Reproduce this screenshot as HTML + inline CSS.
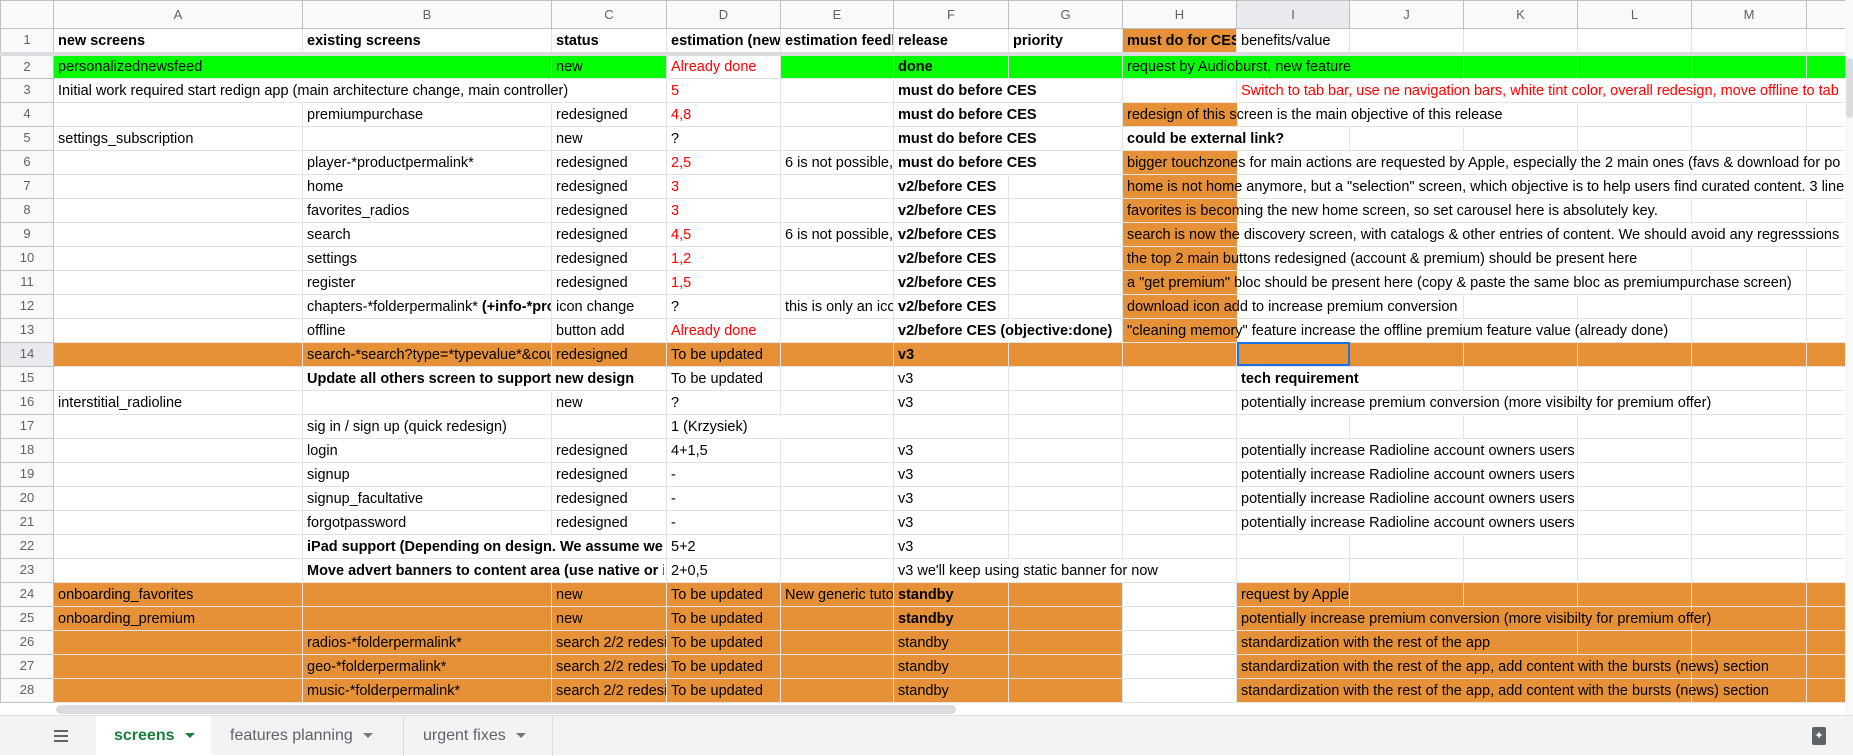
<!DOCTYPE html>
<html><head><meta charset="utf-8"><style>
*{margin:0;padding:0;box-sizing:border-box}
body{width:1853px;height:755px;overflow:hidden;background:#fff;font-family:"Liberation Sans",Arial,sans-serif;position:relative}
table{position:absolute;left:0;top:0;border-collapse:collapse;table-layout:fixed;width:1845px}
td{border:1px solid #e2e3e3;height:24px;font-size:14.5px;line-height:22px;padding:0 4px;white-space:nowrap;overflow:hidden;color:#000;vertical-align:bottom}
td.o{overflow:visible}
td.c{border-left-style:hidden}
tr.h td{background:#f8f9fa;color:#5f6368;text-align:center;font-size:13px;height:28px;vertical-align:middle;border-color:#c0c0c0}
td.n{background:#f8f9fa;color:#5f6368;text-align:center;font-size:13px;border-color:#c0c0c0;padding:0;vertical-align:middle}
tr.h td.sel,td.n.sel{background:#e8eaed}
b{font-weight:bold}
.r{color:#f00}
.g{background:#00ff00}
.or{background:#e69138}
tr.r1 td{height:25px}
tr.r1 td{border-bottom:4px solid #dadce0}
tr.r2 td{height:23px}
.selc{outline:2px solid #1a73e8;outline-offset:-2px}
.clip{display:inline-block;width:357px;overflow:hidden;vertical-align:bottom}
#hs{position:absolute;left:53px;top:704px;width:1792px;height:11px;background:#fff}
#hs div{position:absolute;left:3px;top:1px;width:900px;height:9px;background:#dadce0;border-radius:5px}
#vs{position:absolute;left:1845px;top:0;width:8px;height:715px;background:#f8f9fa}
#vs div{position:absolute;left:1px;top:58px;width:7px;height:60px;background:#dadce0;border-radius:4px}
#tb{position:absolute;left:0;top:715px;width:1853px;height:40px;background:#f1f3f4;border-top:1px solid #e0e0e0}
.tab{position:absolute;top:0;height:40px;font-size:16px;line-height:40px;color:#5f6368;padding-left:18px}
.tab i{display:inline-block;width:0;height:0;border-left:5px solid transparent;border-right:5px solid transparent;border-top:5px solid #757575;margin-left:10px;vertical-align:middle}
</style></head><body>
<table>
<colgroup><col style="width:53px"><col style="width:249px"><col style="width:249px"><col style="width:115px"><col style="width:114px"><col style="width:113px"><col style="width:115px"><col style="width:114px"><col style="width:114px"><col style="width:113px"><col style="width:114px"><col style="width:114px"><col style="width:114px"><col style="width:115px"><col style="width:39px"></colgroup>
<tr class="h"><td></td><td>A</td><td>B</td><td>C</td><td>D</td><td>E</td><td>F</td><td>G</td><td>H</td><td class="sel">I</td><td>J</td><td>K</td><td>L</td><td>M</td><td></td></tr>
<tr class="r1"><td class="n">1</td><td><b>new screens</b></td><td><b>existing screens</b></td><td><b>status</b></td><td><b>estimation (new</b></td><td><b>estimation feedback</b></td><td><b>release</b></td><td><b>priority</b></td><td class="or"><b>must do for CES</b></td><td>benefits/value</td><td></td><td></td><td></td><td></td><td></td></tr>
<tr class="r2"><td class="n">2</td><td class="g o">personalizednewsfeed</td><td class="g c"></td><td class="g">new</td><td class="r">Already done</td><td class="g"></td><td class="g"><b>done</b></td><td class="g"></td><td class="g o">request by Audioburst, new feature</td><td class="g c"></td><td class="g c"></td><td class="g"></td><td class="g"></td><td class="g"></td><td class="g"></td></tr>
<tr><td class="n">3</td><td class="o">Initial work required start redign app (main architecture change, main controller)</td><td class="c"></td><td class="c"></td><td class="r">5</td><td></td><td class="o"><b>must do before CES</b></td><td class="c"></td><td></td><td class="o r">Switch to tab bar, use ne navigation bars, white tint color, overall redesign, move offline to tab</td><td class="c"></td><td class="c"></td><td class="c"></td><td class="c"></td><td class="c"></td></tr>
<tr><td class="n">4</td><td></td><td>premiumpurchase</td><td>redesigned</td><td class="r">4,8</td><td></td><td class="o"><b>must do before CES</b></td><td class="c"></td><td class="or o">redesign of this screen is the main objective of this release</td><td class="c"></td><td class="c"></td><td class="c"></td><td></td><td></td><td></td></tr>
<tr><td class="n">5</td><td>settings_subscription</td><td></td><td>new</td><td>?</td><td></td><td class="o"><b>must do before CES</b></td><td class="c"></td><td class="o"><b>could be external link?</b></td><td class="c"></td><td></td><td></td><td></td><td></td><td></td></tr>
<tr><td class="n">6</td><td></td><td>player-*productpermalink*</td><td>redesigned</td><td class="r">2,5</td><td>6 is not possible, too</td><td class="o"><b>must do before CES</b></td><td class="c"></td><td class="or o">bigger touchzones for main actions are requested by Apple, especially the 2 main ones (favs &amp; download for po</td><td class="c"></td><td class="c"></td><td class="c"></td><td class="c"></td><td class="c"></td><td class="c"></td></tr>
<tr><td class="n">7</td><td></td><td>home</td><td>redesigned</td><td class="r">3</td><td></td><td><b>v2/before CES</b></td><td></td><td class="or o">home is not home anymore, but a "selection" screen, which objective is to help users find curated content. 3 line</td><td class="c"></td><td class="c"></td><td class="c"></td><td class="c"></td><td class="c"></td><td class="c"></td></tr>
<tr><td class="n">8</td><td></td><td>favorites_radios</td><td>redesigned</td><td class="r">3</td><td></td><td><b>v2/before CES</b></td><td></td><td class="or o">favorites is becoming the new home screen, so set carousel here is absolutely key.</td><td class="c"></td><td class="c"></td><td class="c"></td><td class="c"></td><td></td><td></td></tr>
<tr><td class="n">9</td><td></td><td>search</td><td>redesigned</td><td class="r">4,5</td><td>6 is not possible, too</td><td><b>v2/before CES</b></td><td></td><td class="or o">search is now the discovery screen, with catalogs &amp; other entries of content. We should avoid any regresssions</td><td class="c"></td><td class="c"></td><td class="c"></td><td class="c"></td><td class="c"></td><td class="c"></td></tr>
<tr><td class="n">10</td><td></td><td>settings</td><td>redesigned</td><td class="r">1,2</td><td></td><td><b>v2/before CES</b></td><td></td><td class="or o">the top 2 main buttons redesigned (account &amp; premium) should be present here</td><td class="c"></td><td class="c"></td><td class="c"></td><td class="c"></td><td></td><td></td></tr>
<tr><td class="n">11</td><td></td><td>register</td><td>redesigned</td><td class="r">1,5</td><td></td><td><b>v2/before CES</b></td><td></td><td class="or o">a "get premium" bloc should be present here (copy &amp; paste the same bloc as premiumpurchase screen)</td><td class="c"></td><td class="c"></td><td class="c"></td><td class="c"></td><td class="c"></td><td></td></tr>
<tr><td class="n">12</td><td></td><td>chapters-*folderpermalink* <b>(+info-*productpermalink*)</b></td><td>icon change</td><td>?</td><td>this is only an icon</td><td><b>v2/before CES</b></td><td></td><td class="or o">download icon add to increase premium conversion</td><td class="c"></td><td class="c"></td><td></td><td></td><td></td><td></td></tr>
<tr><td class="n">13</td><td></td><td>offline</td><td>button add</td><td class="r">Already done</td><td></td><td class="o"><b>v2/before CES (objective:done)</b></td><td class="c"></td><td class="or o">"cleaning memory" feature increase the offline premium feature value (already done)</td><td class="c"></td><td class="c"></td><td class="c"></td><td class="c"></td><td></td><td></td></tr>
<tr><td class="n sel">14</td><td class="or"></td><td class="or">search-*search?type=*typevalue*&amp;country</td><td class="or">redesigned</td><td class="or">To be updated</td><td class="or"></td><td class="or"><b>v3</b></td><td class="or"></td><td class="or"></td><td class="or selc"></td><td class="or"></td><td class="or"></td><td class="or"></td><td class="or"></td><td class="or"></td></tr>
<tr><td class="n">15</td><td></td><td class="o"><span class="clip"><b>Update all others screen to support new design</b></span></td><td class="c"></td><td>To be updated</td><td></td><td>v3</td><td></td><td></td><td class="o"><b>tech requirement</b></td><td class="c"></td><td></td><td></td><td></td><td></td></tr>
<tr><td class="n">16</td><td>interstitial_radioline</td><td></td><td>new</td><td>?</td><td></td><td>v3</td><td></td><td></td><td class="o">potentially increase premium conversion (more visibilty for premium offer)</td><td class="c"></td><td class="c"></td><td class="c"></td><td></td><td></td></tr>
<tr><td class="n">17</td><td></td><td>sig in / sign up (quick redesign)</td><td></td><td class="o">1 (Krzysiek)</td><td class="c"></td><td></td><td></td><td></td><td></td><td></td><td></td><td></td><td></td><td></td></tr>
<tr><td class="n">18</td><td></td><td>login</td><td>redesigned</td><td>4+1,5</td><td></td><td>v3</td><td></td><td></td><td class="o">potentially increase Radioline account owners users</td><td class="c"></td><td class="c"></td><td></td><td></td><td></td></tr>
<tr><td class="n">19</td><td></td><td>signup</td><td>redesigned</td><td>-</td><td></td><td>v3</td><td></td><td></td><td class="o">potentially increase Radioline account owners users</td><td class="c"></td><td class="c"></td><td></td><td></td><td></td></tr>
<tr><td class="n">20</td><td></td><td>signup_facultative</td><td>redesigned</td><td>-</td><td></td><td>v3</td><td></td><td></td><td class="o">potentially increase Radioline account owners users</td><td class="c"></td><td class="c"></td><td></td><td></td><td></td></tr>
<tr><td class="n">21</td><td></td><td>forgotpassword</td><td>redesigned</td><td>-</td><td></td><td>v3</td><td></td><td></td><td class="o">potentially increase Radioline account owners users</td><td class="c"></td><td class="c"></td><td></td><td></td><td></td></tr>
<tr><td class="n">22</td><td></td><td class="o"><span class="clip"><b>iPad support (Depending on design. We assume we will</b></span></td><td class="c"></td><td>5+2</td><td></td><td>v3</td><td></td><td></td><td></td><td></td><td></td><td></td><td></td><td></td></tr>
<tr><td class="n">23</td><td></td><td class="o"><span class="clip"><b>Move advert banners to content area (use native or in</b></span></td><td class="c"></td><td>2+0,5</td><td></td><td class="o">v3 we'll keep using static banner for now</td><td class="c"></td><td class="c"></td><td></td><td></td><td></td><td></td><td></td><td></td></tr>
<tr><td class="n">24</td><td class="or">onboarding_favorites</td><td class="or"></td><td class="or">new</td><td class="or">To be updated</td><td class="or">New generic tutorial</td><td class="or"><b>standby</b></td><td class="or"></td><td></td><td class="or o">request by Apple</td><td class="or"></td><td class="or"></td><td class="or"></td><td class="or"></td><td class="or"></td></tr>
<tr><td class="n">25</td><td class="or">onboarding_premium</td><td class="or"></td><td class="or">new</td><td class="or">To be updated</td><td class="or"></td><td class="or"><b>standby</b></td><td class="or"></td><td></td><td class="or o">potentially increase premium conversion (more visibilty for premium offer)</td><td class="or c"></td><td class="or c"></td><td class="or c"></td><td class="or"></td><td class="or"></td></tr>
<tr><td class="n">26</td><td class="or"></td><td class="or">radios-*folderpermalink*</td><td class="or">search 2/2 redesigned</td><td class="or">To be updated</td><td class="or"></td><td class="or">standby</td><td class="or"></td><td></td><td class="or o">standardization with the rest of the app</td><td class="or c"></td><td class="or c"></td><td class="or"></td><td class="or"></td><td class="or"></td></tr>
<tr><td class="n">27</td><td class="or"></td><td class="or">geo-*folderpermalink*</td><td class="or">search 2/2 redesigned</td><td class="or">To be updated</td><td class="or"></td><td class="or">standby</td><td class="or"></td><td></td><td class="or o">standardization with the rest of the app, add content with the bursts (news) section</td><td class="or c"></td><td class="or c"></td><td class="or c"></td><td class="or"></td><td class="or"></td></tr>
<tr><td class="n">28</td><td class="or"></td><td class="or">music-*folderpermalink*</td><td class="or">search 2/2 redesigned</td><td class="or">To be updated</td><td class="or"></td><td class="or">standby</td><td class="or"></td><td></td><td class="or o">standardization with the rest of the app, add content with the bursts (news) section</td><td class="or c"></td><td class="or c"></td><td class="or c"></td><td class="or"></td><td class="or"></td></tr>
</table>
<div id="vs"><div></div></div>
<div id="hs"><div></div></div>
<div id="tb">
 <div style="position:absolute;left:54px;top:14px;width:14px;height:12px;border-top:2px solid #5f6368;border-bottom:2px solid #5f6368"><div style="margin-top:3px;height:2px;background:#5f6368"></div></div>
 <div class="tab" style="left:96px;width:115px;background:#fff;color:#188038;font-weight:bold;padding-left:18px">screens<i style="border-top-color:#188038"></i></div>
 <div class="tab" style="left:212px;width:192px;border-right:1px solid #dadce0">features planning<i></i></div>
 <div class="tab" style="left:405px;width:148px;border-right:1px solid #dadce0">urgent fixes<i></i></div>
 <div style="position:absolute;left:1812px;top:11px;width:14px;height:18px;background:#5f6368;border-radius:2px;color:#fff;font-size:11px;line-height:18px;text-align:center">✦</div>
</div>
</body></html>
